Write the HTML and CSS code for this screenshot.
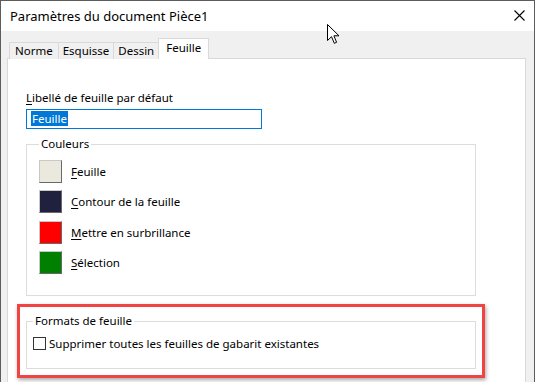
FILE: index.html
```html
<!DOCTYPE html>
<html lang="fr">
<head>
<meta charset="utf-8">
<title>Paramètres du document Pièce1</title>
<link rel="stylesheet" href="styles.css">
</head>
<body>
<div class="window">
  <div class="titlebar">
    <span class="title">Paramètres du document Pièce1</span>
    <svg class="close" width="11" height="11" viewBox="0 0 11 11"><path d="M0.5 0.5 L10.5 10.5 M10.5 0.5 L0.5 10.5" stroke="#000" stroke-width="1.1" fill="none"/></svg>
  </div>
  <div class="body">
    <div class="tabs">
      <div class="tab first">Norme</div>
      <div class="tab">Esquisse</div>
      <div class="tab">Dessin</div>
      <div class="tab active">Feuille</div>
    </div>
    <div class="panel">
      <div class="label"><u>L</u>ibellé de feuille par défaut</div>
      <div class="input"><span class="sel">Feuille</span></div>
      <fieldset class="group colors">
        <legend>Couleurs</legend>
        <div class="row"><span class="swatch sw-sheet"></span><span class="rlabel"><u>F</u>euille</span></div>
        <div class="row"><span class="swatch sw-outline"></span><span class="rlabel"><u>C</u>ontour de la feuille</span></div>
        <div class="row"><span class="swatch sw-highlight"></span><span class="rlabel"><u>M</u>ettre en surbrillance</span></div>
        <div class="row"><span class="swatch sw-select"></span><span class="rlabel"><u>S</u>élection</span></div>
      </fieldset>
      <div class="highlight">
        <fieldset class="group formats">
          <legend>Formats de feuille</legend>
          <div class="check-row"><span class="checkbox"></span><span>Supprimer toutes les feuilles de gabarit existantes</span></div>
        </fieldset>
      </div>
    </div>
  </div>
  <svg class="cursor" width="14" height="21" viewBox="0 0 14 21"><path d="M0.5 0.5 L0.5 16.5 L4.5 12.7 L7.3 19.3 L9.6 18.3 L6.9 11.8 L12 11.8 Z" fill="#fff" stroke="#000" stroke-width="1" stroke-linejoin="miter"/></svg>
</div>
</body>
</html>
```
FILE: styles.css
```css
* { box-sizing: border-box; }
html, body { margin: 0; padding: 0; }
body {
  width: 535px;
  height: 382px;
  overflow: hidden;
  background: #f0f0f0;
  font-family: "Noto Sans", "Liberation Sans", sans-serif;
  font-size: 11.5px;
  color: #000;
}
.window {
  position: relative;
  width: 535px;
  height: 382px;
  border: 1px solid #5c5c5c;
  border-bottom: none;
  background: #f0f0f0;
  overflow: hidden;
}
.titlebar {
  height: 30px;
  background: #fff;
  display: flex;
  align-items: center;
  justify-content: space-between;
  padding: 0 9px 0 9px;
}
.title { font-size: 13px; line-height: 16px; margin-top: -1px; }
.close { margin-top: -1px; }
.body { padding: 7px 8px 0 6px; }
.tabs {
  display: flex;
  align-items: flex-end;
  height: 20px;
  position: relative;
  z-index: 1;
}
.tab {
  height: 17px;
  line-height: 15px;
  padding: 0 4px;
  border: 1px solid #d9d9d9;
  border-bottom: none;
  border-left: none;
  background: #f0f0f0;
  margin-bottom: -1px;
}
.tab.first { border-left: 1px solid #d9d9d9; margin-left: 2px; padding: 0 5px; }
.tab.active {
  background: #fff;
  height: 21px;
  line-height: 17px;
  margin-left: -1px;
  padding: 0 7px;
  border-left: 1px solid #d9d9d9;
}
.panel {
  background: #fff;
  border: 1px solid #d9d9d9;
  height: 330px;
  padding: 31px 0 0 18px;
}
.label { line-height: 16px; }
.label u, .rlabel u { text-underline-offset: 2px; }
.input {
  width: 236px;
  height: 20px;
  border: 1px solid #0078d7;
  margin-top: 3px;
  padding: 1px 0 0 4px;
  line-height: 15px;
}
.sel { background: #0078d7; color: #fff; padding: 0 1px; }
.group {
  margin: 0;
  border: 1px solid #dcdcdc;
  width: 450px;
}
.group legend { padding: 0 2px; line-height: 16px; }
.colors {
  margin-top: 7px;
  height: 160px;
  padding: 4px 0 0 12px;
}
.row {
  display: flex;
  align-items: center;
  height: 30.5px;
  gap: 9px;
}
.swatch {
  width: 23px;
  height: 23px;
  border: 1px solid;
  border-color: #c8c8c8 #696969 #696969 #c8c8c8;
}
.sw-sheet { background: #ebe9de; }
.sw-outline { background: #20203f; }
.sw-highlight { background: #ff0000; }
.sw-select { background: #008000; }
.highlight {
  margin: 8px 0 0 -9px;
  width: 468px;
  height: 74px;
  border: 3px solid #f24343;
  box-shadow: 1px 2px 4px rgba(0,0,0,0.35);
  padding: 6px 6px 0 6px;
}
.formats {
  height: 56px;
  padding: 6px 0 0 6px;
}
.check-row { display: flex; align-items: center; gap: 3px; margin-top: 1px; }
.checkbox {
  width: 13px;
  height: 13px;
  border: 1px solid #333;
  background: #fff;
}
.cursor { position: absolute; left: 326px; top: 23px; }
```
